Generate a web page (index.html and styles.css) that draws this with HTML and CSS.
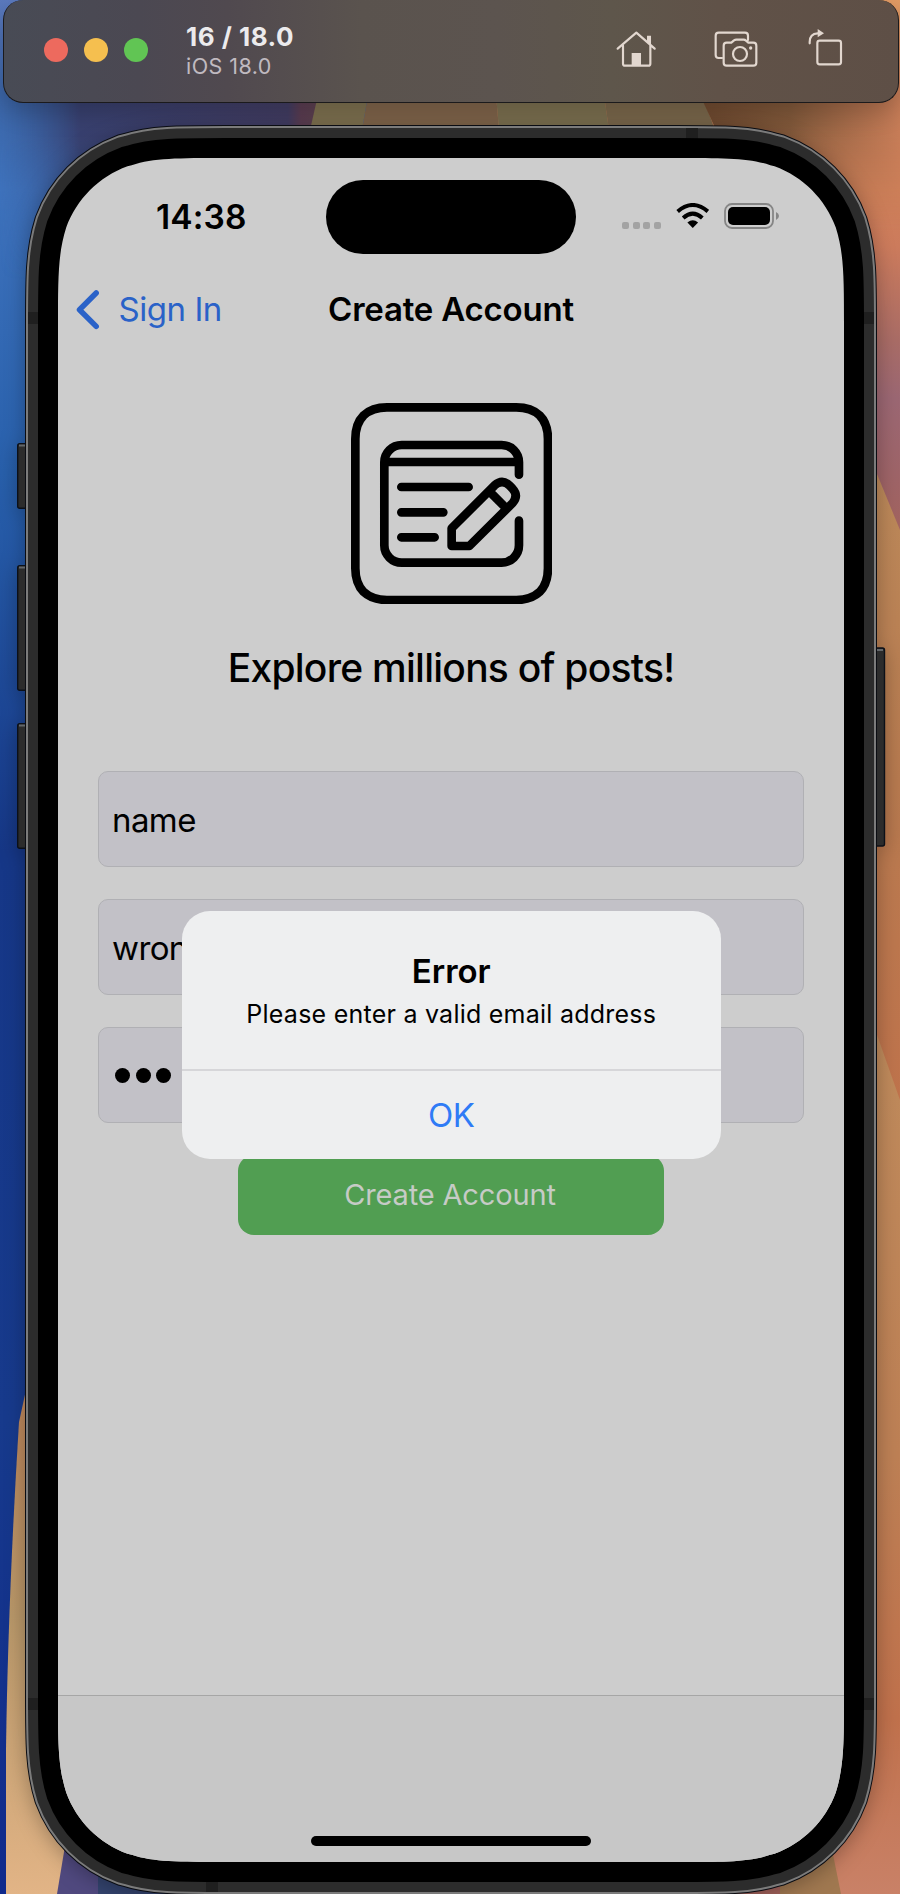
FILE: index.html
```html
<!DOCTYPE html>
<html lang="en">
<head>
<meta charset="utf-8">
<title>Create Account</title>
<link rel="stylesheet" href="styles.css">
</head>
<body>
<div class="desktop">
  <svg class="wallpaper" viewBox="0 0 900 1894" aria-hidden="true">
    <defs>
      <linearGradient id="blue" x1="0" y1="0" x2="0" y2="1"><stop offset="0" stop-color="#5b79bd"/><stop offset=".05" stop-color="#3c66a8"/><stop offset=".1" stop-color="#3e72bc"/><stop offset=".25" stop-color="#2860ac"/><stop offset=".45" stop-color="#163787"/><stop offset=".75" stop-color="#173a8c"/><stop offset="1" stop-color="#102a8c"/></linearGradient>
      <linearGradient id="violet" x1="0" y1="0" x2="1" y2="0"><stop offset="0" stop-color="#36558f" stop-opacity="0"/><stop offset=".25" stop-color="#38406f"/><stop offset=".9" stop-color="#423d63"/><stop offset=".94" stop-color="#5b3d52"/><stop offset="1" stop-color="#5d4150"/></linearGradient>
      <linearGradient id="fade" x1="0" y1="0" x2="0" y2="1"><stop offset=".25" stop-color="#fff"/><stop offset="1" stop-color="#fff" stop-opacity="0"/></linearGradient>
      <mask id="fadeLeft"><rect x="0" y="90" width="320" height="190" fill="url(#fade)"/></mask>
      <mask id="fadeRight"><rect x="690" y="90" width="210" height="140" fill="url(#fade)"/></mask>
      <linearGradient id="right" x1="0" y1="0" x2="0" y2="1"><stop offset="0" stop-color="#e09a64"/><stop offset=".05" stop-color="#c67c57"/><stop offset=".1" stop-color="#d08059"/><stop offset=".13" stop-color="#cc7b5c"/><stop offset=".18" stop-color="#a96c66"/><stop offset=".21" stop-color="#9b6773"/><stop offset=".25" stop-color="#9e6468"/><stop offset=".29" stop-color="#a4635c"/></linearGradient>
      <linearGradient id="tan" x1="0" y1="0" x2="0" y2="1"><stop offset="0" stop-color="#bb895a"/><stop offset=".5" stop-color="#b97b50"/><stop offset="1" stop-color="#bf734c"/></linearGradient>
      <linearGradient id="clay" x1="0" y1="0" x2="0" y2="1"><stop offset="0" stop-color="#bf8b5c"/><stop offset=".5" stop-color="#bd8055"/><stop offset=".8" stop-color="#c0714c"/><stop offset="1" stop-color="#c98167"/></linearGradient>
      <linearGradient id="sand" x1="0" y1="0" x2="0" y2="1"><stop offset="0" stop-color="#bd855a"/><stop offset=".45" stop-color="#b89769"/><stop offset="1" stop-color="#e2b486"/></linearGradient>
      <linearGradient id="top" x1="0" y1="0" x2="1" y2="0"><stop offset="0" stop-color="#6f4a30"/><stop offset=".45" stop-color="#80583a"/><stop offset="1" stop-color="#c67c57"/></linearGradient>
    </defs>
    <rect width="450" height="1894" fill="url(#blue)"/>
    <rect x="450" width="450" height="1894" fill="url(#right)"/>
    <rect x="0" y="90" width="320" height="190" fill="url(#violet)" mask="url(#fadeLeft)"/>
    <path d="M318,95 H368 L362,130 H310Z" fill="#7e7150"/>
    <path d="M368,95 H496 L499,130 H362Z" fill="#80654b"/>
    <path d="M496,95 H604 L609,130 H499Z" fill="#7c7050"/>
    <path d="M604,95 H702 L715,130 H609Z" fill="#7b684c"/>
    <path d="M700,95 H900 V230 H762Z" fill="url(#top)" mask="url(#fadeRight)"/>
    <path d="M870,458 L877,474 L900,530 V1105 L870,1015Z" fill="url(#tan)"/>
    <path d="M870,1015 L900,1100 V1894 H790 V1780 H870Z" fill="url(#clay)"/>
    <path d="M780,1820 H826 L841,1894 H780Z" fill="#a07850"/>
    <path d="M26,1390 L19,1422 Q8,1600 6,1750 V1894 H70 V1390Z" fill="url(#sand)"/>
    <path d="M66,1840 L57,1894 H98 V1840Z" fill="#50497f"/>
    <path d="M98,1840 H210 V1894 H98Z" fill="#34446f"/>
  </svg>

  <header class="toolbar">
    <div class="lights"><span class="light red"></span><span class="light yellow"></span><span class="light green"></span></div>
    <div class="device">
      <div class="device-name">16 / 18.0</div>
      <div class="device-os">iOS 18.0</div>
    </div>
    <div class="tools">
      <svg class="tool-home" viewBox="46 46 122 110"><path d="M51,99 L107,51 L162,99 M67,90 V144 Q67,150 73,150 H143 Q149,150 149,144 V90" /><path class="solid" d="M139,60 H151 V88 L139,77Z M93,112 H121 V150 H93Z"/></svg>
      <svg class="tool-camera" viewBox="340 46 132 110"><path d="M363,127 H354 Q345,127 345,118 V60 Q345,51 354,51 H433 Q442,51 442,60 V73 M378,81 H392 L400,74 Q403,72 407,72 H429 Q433,72 436,75 L443,81 H458 Q467,81 467,90 V141 Q467,150 458,150 H378 Q369,150 369,141 V90 Q369,81 378,81Z"/><circle cx="418" cy="115" r="21"/><circle class="solid" cx="450" cy="97" r="5"/></svg>
      <svg class="tool-rotate" viewBox="622 36 104 114"><rect x="650" y="74" width="71" height="71" rx="7"/><path d="M627,82 V78 Q627,53 651,52"/><path class="solid" d="M651,39 L670,52 L651,64Z"/></svg>
    </div>
  </header>

  <div class="phone">
    <svg class="chassis" viewBox="-50 -40 878 1776" aria-hidden="true">
      <defs>
        <path id="outline" d="M168.2,0 H617.8 C666.3,0 690.5,0 712.3,7.2 L716.5,8.2 C745,18.6 767.4,41 777.8,69.5 C786,95.5 786,119.7 786,168.2 V1535.8 C786,1584.3 786,1608.5 777.8,1634.5 C767.4,1663 745,1685.4 716.5,1695.8 L712.3,1696.8 C690.5,1704 666.3,1704 617.8,1704 H168.2 C119.7,1704 95.5,1704 73.7,1696.8 L69.5,1695.8 C41,1685.4 18.6,1663 8.2,1634.5 C0,1608.5 0,1584.3 0,1535.8 V168.2 C0,119.7 0,95.5 8.2,69.5 C18.6,41 41,18.6 69.5,8.2 L73.7,7.2 C95.5,0 119.7,0 168.2,0Z"/>
      </defs>
      <g fill="#2c2c2c" stroke="#0c1018" stroke-width="1.4">
        <rect x="-40.3" y="285.7" width="16" height="64.5" rx="2"/><rect x="-40.3" y="407.7" width="16" height="124.5" rx="2"/><rect x="-40.3" y="565.7" width="16" height="124.5" rx="2"/><rect x="810" y="490" width="16.5" height="198" rx="2"/>
      </g>
      <g fill="#63676a"><rect x="-39" y="286.5" width="8" height="2"/><rect x="-39" y="408.5" width="8" height="2"/><rect x="-39" y="566.5" width="8" height="2"/><rect x="818" y="491" width="7" height="2"/></g>
      <g fill="none">
        <use href="#outline" stroke="#0a0c12" stroke-width="66"/>
        <use href="#outline" stroke="#7b7b7b" stroke-width="64"/>
        <use href="#outline" stroke="#2c2c2c" stroke-width="60"/>
      </g>
      <path fill="#1f1f1f" d="M-30,154h12v12h-12z M804,154h12v12h-12z M-30,1540h12v12h-12z M804,1540h12v12h-12z M628,-30h12v12h-12z M148,1722h12v12h-12z"/>
      <use href="#outline" fill="#000" stroke="#000" stroke-width="40"/>
    </svg>

    <div class="screen">
      <div class="status">
        <div class="time">14:38</div>
        <div class="island"></div>
        <div class="indicators">
          <div class="cell"><i></i><i></i><i></i><i></i></div>
          <svg class="wifi" viewBox="677 610 101 77"><g fill="none" stroke="#000"><path stroke-width="12" d="M681,636 Q727.500,596 774,636"/><path stroke-width="12.500" d="M698,656 Q727.500,630 757,656"/></g><path d="M711,670 Q727.500,656 744,670 L727.500,687Z"/></svg>
          <svg class="battery" viewBox="0 0 56 26"><rect x="1" y="1" width="48" height="24" rx="7" fill="none" stroke="#858585" stroke-width="1.800"/><rect x="4" y="4" width="42" height="18" rx="5"/><path fill="#858585" d="M52,9 Q55,10.500 55,13 Q55,15.500 52,17Z"/></svg>
        </div>
      </div>

      <nav class="nav">
        <a class="back"><svg viewBox="0 0 24 40"><path d="M20.200,3 L3.500,19.700 L20.200,36.400"/></svg><span>Sign In</span></a>
        <h1 class="nav-title">Create Account</h1>
        <span></span>
      </nav>

      <main class="form">
        <svg class="logo" viewBox="62 37 604 604">
          <path d="M170,50 H558 C590,50 610,57 628,74 C646,92 653,113 653,145 V533 C653,565 646,586 628,604 C610,621 590,628 558,628 H170 C138,628 118,621 100,604 C82,586 75,565 75,533 V145 C75,113 82,92 100,74 C118,57 138,50 170,50Z"/>
          <path d="M566,252 V215 A52,52 0 0 0 514,163 H214 A52,52 0 0 0 162,215 V464 A52,52 0 0 0 214,516 H514 A52,52 0 0 0 566,464 V390 M162,214 H566 M213,289 H415 M213,365 H339 M213,440 H313"/>
          <path d="M364,466 V413 L493,284 Q516,264 538,285 L546,293 Q566,315 547,337 L417,466Z M478,303 L524,349"/>
        </svg>
        <h2 class="headline">Explore millions of posts!</h2>
        <div class="fields">
          <div class="field"><span>name</span></div>
          <div class="field"><span>wrong</span></div>
          <div class="field secret"><i></i><i></i><i></i></div>
        </div>
        <button class="submit">Create Account</button>
      </main>

      <footer class="tabbar"><div class="home-indicator"></div></footer>

      <div class="alert" role="alertdialog">
        <div class="alert-body">
          <div class="alert-title">Error</div>
          <div class="alert-text">Please enter a valid email address</div>
        </div>
        <div class="alert-action">OK</div>
      </div>
    </div>
  </div>
</div>
</body>
</html>
```
FILE: styles.css
```css
* { box-sizing: border-box; }
html, body { margin: 0; overflow: hidden; }
body { font-family: Inter, "Liberation Sans", sans-serif; color: #000; }
h1, h2 { margin: 0; }
span, div { white-space: nowrap; }

.desktop { position: relative; width: 900px; height: 1894px; overflow: hidden; }
.wallpaper { position: absolute; inset: 0; width: 900px; height: 1894px; }

.toolbar {
  position: relative; height: 103px; margin: 0 1px 0 3px; padding: 0 55.5px 3px 40px;
  display: flex; align-items: center;
  border: 1px solid #1b1a1c; border-top: 0; border-radius: 20px;
  background: linear-gradient(90deg, #484b55 0%, #4b4852 15%, #50494f 25%, #5a534e 40%, #5c544f 55%, #5e564b 68%, #605248 80%, #5e4f46 100%);
  box-shadow: 0 10px 24px rgba(0, 0, 0, .2);
}
.lights { display: flex; gap: 16px; }
.light { width: 24px; height: 24px; border-radius: 50%; }
.red { background: #ed6a5e; }
.yellow { background: #f5bf4f; }
.green { background: #61c554; }
.device { margin-left: 38px; padding-top: 1px; }
.device-name { font-size: 26px; font-weight: 700; line-height: 32px; color: #ecebed; letter-spacing: .5px; }
.device-os { font-size: 21.5px; line-height: 27px; color: #c0bac0; letter-spacing: .45px; }
.tools { margin-left: auto; display: flex; align-items: center; }
.tools svg { fill: none; stroke: #e2d7cf; stroke-width: 6.5; stroke-linecap: round; stroke-linejoin: round; }
.tools .solid { fill: #e2d7cf; stroke: none; }
.tool-home { width: 40.7px; height: 36.7px; }
.tool-camera { width: 44px; height: 36.7px; margin-left: 57.3px; }
.tool-rotate { width: 34.7px; height: 38px; margin: -5px 0 0 50px; }

.phone { position: relative; padding: 55px 56px 32px 58px; }
.chassis { position: absolute; left: 8px; top: 15px; width: 878px; height: 1776px; overflow: visible; filter: drop-shadow(0 4px 10px rgba(0, 0, 0, .28)); }

.screen {
  position: relative; width: 786px; height: 1704px; background: #cdcdcd;
  display: flex; flex-direction: column;
  clip-path: path("M168.2,0 H617.8 C666.3,0 690.5,0 712.3,7.2 L716.5,8.2 C745,18.6 767.4,41 777.8,69.5 C786,95.5 786,119.7 786,168.2 V1535.8 C786,1584.3 786,1608.5 777.8,1634.5 C767.4,1663 745,1685.4 716.5,1695.8 L712.3,1696.8 C690.5,1704 666.3,1704 617.8,1704 H168.2 C119.7,1704 95.5,1704 73.7,1696.8 L69.5,1695.8 C41,1685.4 18.6,1663 8.2,1634.5 C0,1608.5 0,1584.3 0,1535.8 V168.2 C0,119.7 0,95.5 8.2,69.5 C18.6,41 41,18.6 69.5,8.2 L73.7,7.2 C95.5,0 119.7,0 168.2,0Z");
}
.status { height: 108px; padding-top: 22.4px; display: grid; grid-template-columns: 268px 250px 1fr; align-items: start; }
.time { padding-left: 98px; font-size: 33.5px; font-weight: 600; line-height: 74px; letter-spacing: .15px; }
.island { height: 73.6px; border-radius: 37px; background: #000; }
.indicators { display: flex; align-items: flex-start; padding: 23px 0 0 46px; }
.cell { display: flex; gap: 3.7px; margin-top: 18.5px; }
.cell i { width: 7px; height: 7px; border-radius: 2px; background: #a3a3a3; }
.wifi { width: 33.5px; height: 25px; margin-left: 14.6px; }
.battery { width: 56px; height: 26px; margin-left: 14.7px; }

.nav { height: 87px; padding: 0 18px; display: grid; grid-template-columns: 1fr auto 1fr; align-items: center; }
.back { display: flex; align-items: center; color: #2a62c8; font-size: 33px; line-height: 43px; letter-spacing: -.45px; }
.back svg { width: 24px; height: 40px; margin-right: 18.5px; fill: none; stroke: currentColor; stroke-width: 5.5; stroke-linecap: round; stroke-linejoin: round; }
.nav-title { font-size: 33px; font-weight: 600; line-height: 44px; letter-spacing: -.2px; margin-top: -1px; }

.form { flex: 1; display: flex; flex-direction: column; align-items: center; padding-top: 49.7px; }
.logo { width: 201.3px; height: 201.3px; margin-left: .6px; fill: none; stroke: #000; stroke-width: 26; stroke-linecap: round; stroke-linejoin: round; flex: none; }
.headline { margin-top: 40px; font-size: 39px; font-weight: 500; line-height: 48px; letter-spacing: -.74px; }
.fields { width: 706px; margin-top: 79px; display: flex; flex-direction: column; gap: 32px; }
.field { height: 96px; padding: 2px 13px 0; display: flex; align-items: center; border: 1px solid #b0b0b4; border-radius: 10px; background: #c2c1c7; font-size: 33px; letter-spacing: -.6px; }
.secret { gap: 5.5px; padding-left: 16px; }
.secret i { width: 15px; height: 15px; border-radius: 50%; background: #000; }
.submit { width: 426px; height: 80px; margin-top: 32px; border: 0; border-radius: 16px; background: #519e52; color: #c6cbc6; font: 400 29px/80px Inter, sans-serif; letter-spacing: -.15px; padding: 0 2px 0 0; }

.tabbar { height: 167px; border-top: 1px solid #a6a6a6; background: #c7c7c7; display: flex; justify-content: center; align-items: flex-end; padding-bottom: 16px; }
.home-indicator { width: 280px; height: 10px; border-radius: 5px; background: #000; }

.alert { position: absolute; left: 123.5px; top: 753px; width: 539.5px; height: 248px; border-radius: 28px; background: #eeeff0; display: flex; flex-direction: column; text-align: center; }
.alert-body { height: 161px; padding-top: 38px; border-bottom: 2px solid #d6d6d9; }
.alert-title { font-size: 33px; font-weight: 600; line-height: 44px; letter-spacing: 0; }
.alert-text { font-size: 25px; line-height: 42px; letter-spacing: .24px; }
.alert-action { font-size: 33px; line-height: 88px; color: #2f7bf6; letter-spacing: -.5px; }
```
